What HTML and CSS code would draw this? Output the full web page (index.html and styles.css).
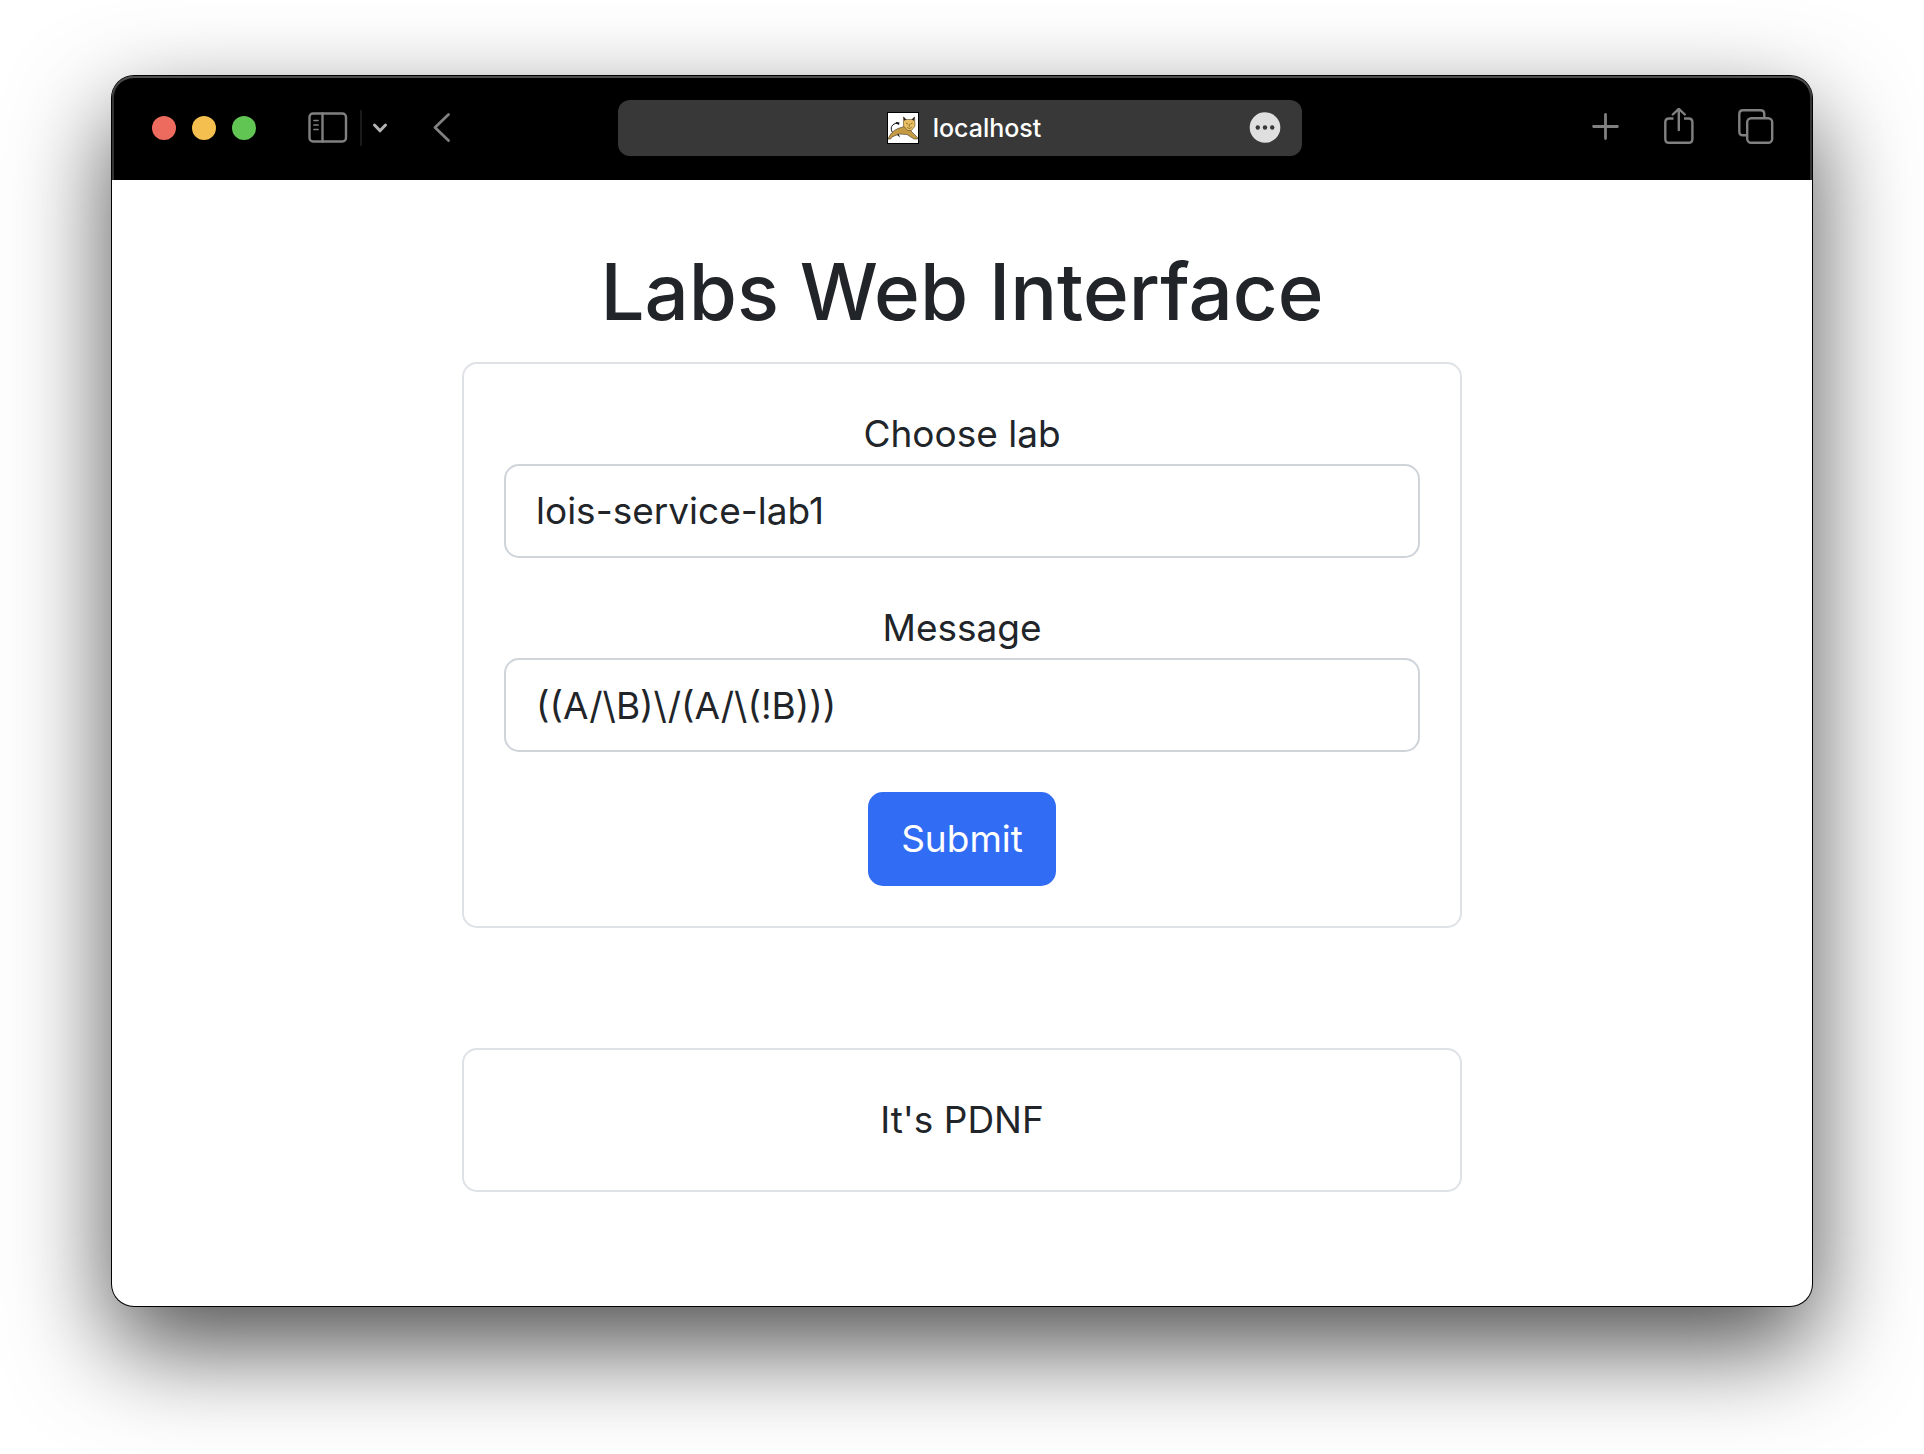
FILE: index.html
```html
<!DOCTYPE html>
<html lang="en">
<head>
  <meta charset="utf-8">
  <meta name="viewport" content="width=device-width, initial-scale=1">
  <title>Labs Web Interface</title>
  <link rel="stylesheet" href="styles.css">
</head>
<body>
  <div class="window">
    <header class="toolbar">
      <div class="toolbar-left">
        <div class="lights">
          <button class="light light-close" type="button" aria-label="Close"></button>
          <button class="light light-minimize" type="button" aria-label="Minimize"></button>
          <button class="light light-zoom" type="button" aria-label="Zoom"></button>
        </div>
        <button class="tool tool-sidebar" type="button" aria-label="Sidebar">
          <svg width="40" height="40" viewBox="0 0 40 40" fill="none" stroke="#808080" stroke-width="2.4" stroke-linecap="round">
            <rect x="1.5" y="5.5" width="36.5" height="28" rx="3.5"/>
            <path d="M14.5 5.5V33.5"/>
            <path d="M6 12.5H10M6 17H10M6 21.5H10" stroke-width="1.7"/>
          </svg>
        </button>
        <span class="divider"></span>
        <button class="tool tool-menu" type="button" aria-label="Sidebar options">
          <svg width="16" height="40" viewBox="0 0 16 40" fill="none" stroke="#b4b4b4" stroke-width="3" stroke-linecap="round" stroke-linejoin="round">
            <path d="M2.5 17L8 22.8L13.5 17"/>
          </svg>
        </button>
        <button class="tool tool-back" type="button" aria-label="Back">
          <svg width="20" height="40" viewBox="0 0 20 40" fill="none" stroke="#808080" stroke-width="2.8" stroke-linecap="round" stroke-linejoin="round">
            <path d="M16.5 6.5L3 19.5L16.5 32.5"/>
          </svg>
        </button>
      </div>
      <div class="address">
        <span class="site">
          <svg class="favicon" width="32" height="32" viewBox="0 0 32 32">
            <rect x="0.5" y="0.5" width="31" height="31" fill="#fff" stroke="#000"/>
            <path d="M5.5 20.5C2.8 16 4.5 11.5 11 11" fill="none" stroke="#111" stroke-width="1"/>
            <path d="M8.5 10L12.5 10.5L12 13L9.5 11.8Z" fill="#111"/>
            <path d="M7 20L13 25.5L11 20Z" fill="#111"/>
            <path d="M1 27C3 22 6 18.5 11 16.5L17 14.5L24 19L30.5 25.5V27H27L20 22.5L12 22L5 25L3.5 27Z" fill="#c59a45" stroke="#3c3528" stroke-width="0.6"/>
            <path d="M16.5 5L19 7.5H25L27.5 5L28 14L24.5 18.5H20.5L16.5 14Z" fill="#e9bd62" stroke="#5e4b26" stroke-width="0.6"/>
            <path d="M16.3 4.5L19.3 7.7L17 8.8ZM27.7 4.5L24.7 7.7L27.2 8.8Z" fill="#222"/>
            <path d="M19 11L21 12M25.5 11L23.5 12M22.3 12V15M20 15.5L22.3 16.5L24.8 15.5" fill="none" stroke="#80662f" stroke-width="0.8"/>
          </svg>
          <span>localhost</span>
        </span>
        <button class="tool more" type="button" aria-label="Page menu">
          <svg width="32" height="32" viewBox="0 0 32 32">
            <circle cx="16" cy="15.5" r="15.3" fill="#dfdfdf"/>
            <g fill="#383838"><circle cx="8.8" cy="15.5" r="2.2"/><circle cx="16" cy="15.5" r="2.2"/><circle cx="23.2" cy="15.5" r="2.2"/></g>
          </svg>
        </button>
      </div>
      <div class="toolbar-right">
        <button class="tool" type="button" aria-label="New tab">
          <svg width="28" height="40" viewBox="0 0 28 40" fill="none" stroke="#808080" stroke-width="2.8" stroke-linecap="round">
            <path d="M1.6 18.5H25.4M13.5 6.5V30.5"/>
          </svg>
        </button>
        <button class="tool" type="button" aria-label="Share">
          <svg width="30" height="40" viewBox="0 0 30 40" fill="none" stroke="#808080" stroke-width="2.4" stroke-linecap="round" stroke-linejoin="round">
            <path d="M9.5 10.5H5Q1.3 10.5 1.3 14.2V31Q1.3 34.8 5 34.8H24.6Q28.4 34.8 28.4 31V14.2Q28.4 10.5 24.6 10.5H20" stroke-linecap="butt"/>
            <path d="M14.8 22V0.8M8.8 6.5L14.8 0.8L20.8 6.5"/>
          </svg>
        </button>
        <button class="tool" type="button" aria-label="Tab overview">
          <svg width="36" height="40" viewBox="0 0 36 40" fill="none" stroke="#808080" stroke-width="2.4">
            <path d="M9 27.3H5Q1.3 27.3 1.3 23.5V6Q1.3 2.3 5 2.3H22.5Q26.3 2.3 26.3 6V10"/>
            <rect x="9.2" y="10.2" width="25" height="24.6" rx="4"/>
          </svg>
        </button>
      </div>
    </header>
    <main class="page">
      <h1 class="title">Labs Web Interface</h1>
      <form class="card">
        <label class="label" for="lab">Choose lab</label>
        <select class="control" id="lab">
          <option>lois-service-lab1</option>
        </select>
        <label class="label" for="message">Message</label>
        <input class="control" id="message" type="text" value="((A/\B)\/(A/\(!B)))">
        <button class="submit" type="button">Submit</button>
      </form>
      <section class="card result">It's PDNF</section>
    </main>
  </div>
</body>
</html>
```
FILE: styles.css
```css
* {
  box-sizing: border-box;
}

body {
  margin: 0;
  padding: 76px 112px 148px;
  background: #fff;
  color: #212529;
  font-family: Inter, "Liberation Sans", sans-serif;
  font-size: 37px;
  line-height: 60px;
}

button {
  margin: 0;
  padding: 0;
  border: 0;
  font: inherit;
}

.window {
  border-radius: 22px;
  background: #fff;
  box-shadow: 0 0 0 1px #000, 0 40px 100px rgba(0, 0, 0, 0.7);
}

.toolbar {
  display: grid;
  grid-template-columns: minmax(0, 1fr) minmax(0, 684px) minmax(0, 1fr);
  align-items: center;
  height: 104px;
  padding: 0 38px 0 34px;
  border-radius: 22px 22px 0 0;
  background: #000;
  box-shadow: inset 0 2px #4d4d4d, inset 2px 0 #333, inset -2px 0 #333;
}

.toolbar-left,
.toolbar-right,
.lights {
  display: flex;
  align-items: center;
}

.toolbar-left {
  padding-left: 6px;
}

.toolbar-right {
  justify-content: flex-end;
  gap: 44px;
}

.lights {
  gap: 16px;
}

.light {
  width: 24px;
  height: 24px;
  border-radius: 50%;
}

.light-close {
  background: #ec6a5e;
}

.light-minimize {
  background: #f4bf4f;
}

.light-zoom {
  background: #61c554;
}

.tool {
  display: flex;
  background: none;
}

.tool-sidebar {
  margin-left: 52px;
}

.divider {
  width: 2px;
  height: 36px;
  margin: 0 10px 0 12px;
  background: #1a1a1a;
}

.tool-back {
  margin-left: 44px;
}

.address {
  display: grid;
  grid-template-columns: 32px 1fr 32px;
  align-items: center;
  height: 56px;
  padding: 0 21px;
  border-radius: 12px;
  background: #383838;
  color: #fff;
  font-size: 25px;
  font-weight: 500;
  line-height: 34px;
}

.site {
  display: flex;
  grid-column: 2;
  align-items: center;
  justify-content: center;
  gap: 14px;
  padding-left: 8px;
}

.page {
  display: flex;
  flex-direction: column;
  align-items: center;
  padding: 64px 24px 114px;
}

.title {
  margin: 0 0 22px;
  font-size: 78px;
  font-weight: 500;
  line-height: 96px;
}

.card {
  display: flex;
  flex-direction: column;
  align-items: center;
  width: 100%;
  max-width: 1000px;
  padding: 40px;
  border: 2px solid #dee2e6;
  border-radius: 15px;
}

.control {
  width: 100%;
  height: 94px;
  margin: 0 0 40px;
  padding: 15px 30px;
  border: 2px solid #ced4da;
  border-radius: 15px;
  appearance: none;
  background: #fff;
  color: inherit;
  font: inherit;
}

.submit {
  padding: 17px 33px;
  border-radius: 15px;
  background: #316cf4;
  color: #fff;
}

.result {
  margin-top: 120px;
}
```
